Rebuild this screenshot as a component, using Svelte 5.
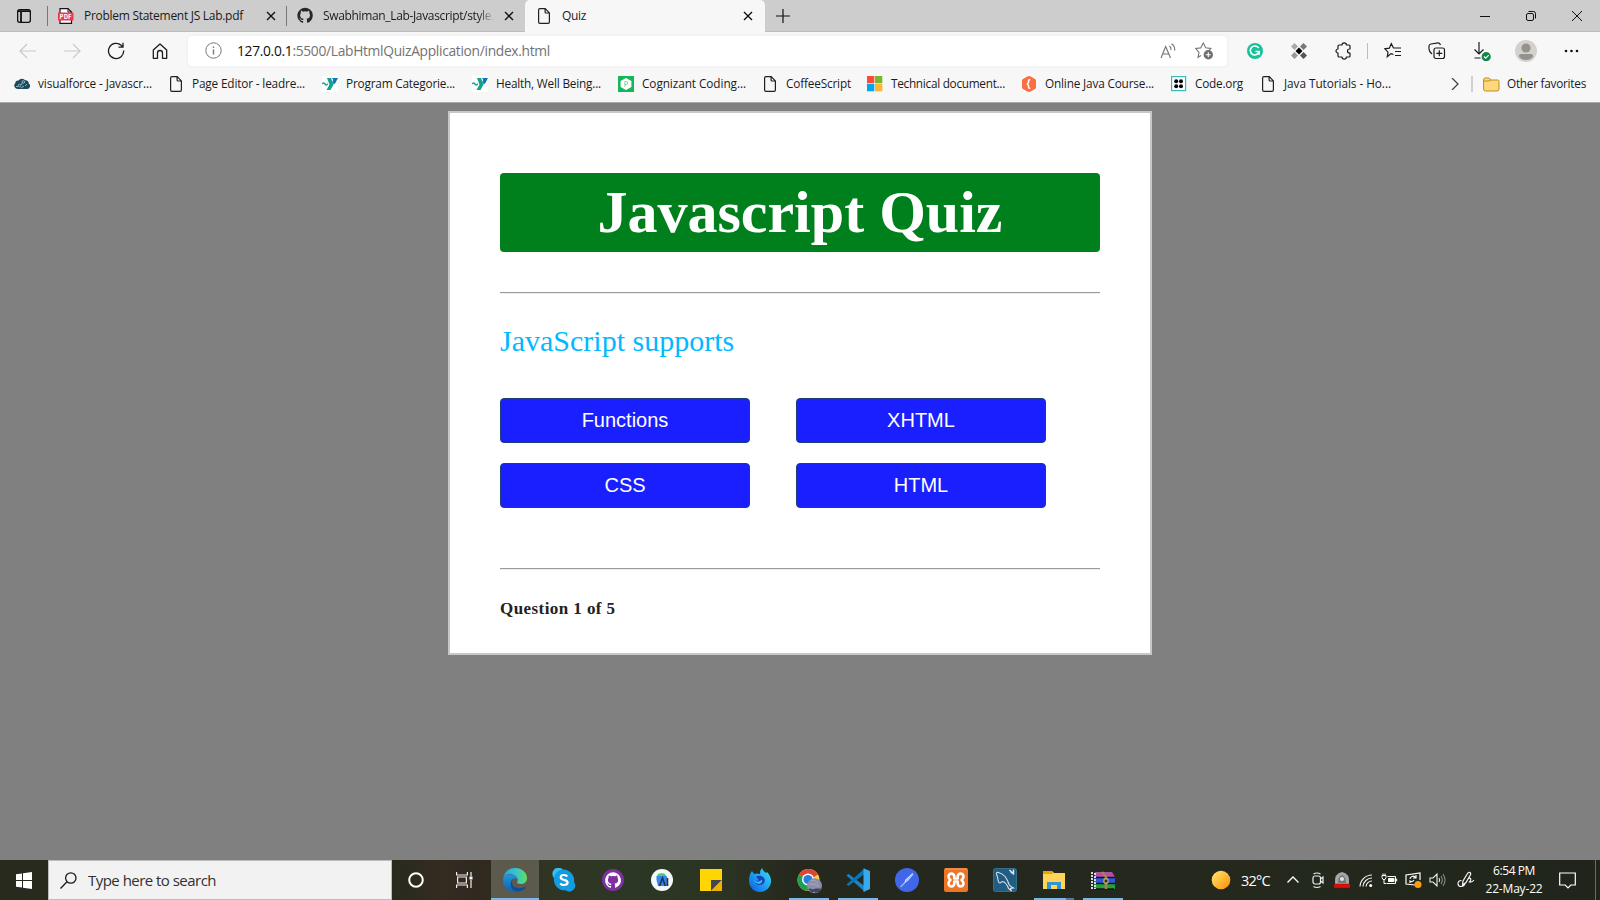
<script>
  const bookmarks = [
    { icon: 'cloud', label: 'visualforce - Javascr...', w: 114, gap: 16 },
    { icon: 'doc', label: 'Page Editor - leadre...', w: 113, gap: 17 },
    { icon: 'ymca', label: 'Program Categorie...', w: 109, gap: 17 },
    { icon: 'ymca', label: 'Health, Well Being...', w: 105, gap: 17 },
    { icon: 'cognizant', label: 'Cognizant Coding...', w: 104, gap: 16 },
    { icon: 'doc', label: 'CoffeeScript', w: 65, gap: 16 },
    { icon: 'microsoft', label: 'Technical document...', w: 114, gap: 16 },
    { icon: 'hex', label: 'Online Java Course...', w: 109, gap: 17 },
    { icon: 'codeorg', label: 'Code.org', w: 48, gap: 17 },
    { icon: 'doc', label: 'Java Tutorials - Ho...', w: 107, gap: 0 }
  ];
  const apps = [
    { icon: 'edge', state: 'active' },
    { icon: 'skype' },
    { icon: 'githubDesktop' },
    { icon: 'studio' },
    { icon: 'notes' },
    { icon: 'firefox' },
    { icon: 'chrome', state: 'open' },
    { icon: 'vscode', state: 'open' },
    { icon: 'postman' },
    { icon: 'xampp' },
    { icon: 'mysql' },
    { icon: 'explorer', state: 'open stacked' },
    { icon: 'winrar', state: 'open' }
  ];
  const choices = ['Functions', 'XHTML', 'CSS', 'HTML'];

  // Tracks a label so it fills the given width.
  function fit(node, width) {
    const natural = node.getBoundingClientRect().width;
    node.style.letterSpacing = (width - natural) / node.textContent.length + 'px';
  }
</script>

{#snippet octocat()}
  <path d="M12 .5a11.5 11.5 0 0 0-3.6 22.4c.6.1.8-.3.8-.6v-2.2c-3.2.7-3.900-1.400-3.900-1.400-.5-1.300-1.300-1.700-1.300-1.700-1-.7.1-.7.1-.7 1.200.1 1.800 1.200 1.800 1.200 1 1.800 2.700 1.300 3.400 1 .1-.8.4-1.300.7-1.600-2.600-.3-5.300-1.300-5.300-5.700 0-1.300.5-2.300 1.200-3.100-.1-.3-.5-1.500.1-3.100 0 0 1-.3 3.200 1.200a11 11 0 0 1 5.800 0c2.200-1.500 3.200-1.200 3.200-1.200.6 1.600.2 2.800.1 3.100.7.8 1.200 1.800 1.200 3.100 0 4.400-2.700 5.400-5.300 5.700.4.4.8 1.100.8 2.200v3.200c0 .3.2.7.8.6A11.500 11.500 0 0 0 12 .5z" />
{/snippet}

{#snippet icon(name)}
  {#if name === 'doc'}
    <svg width="12" height="16" viewBox="0 0 12 16" fill="none" stroke="#202020" stroke-width="1.200"><path d="M1.900.6H7.200L11.400 4.900V14a1.300 1.300 0 0 1-1.300 1.300H1.900A1.300 1.300 0 0 1 .6 14V1.900A1.300 1.300 0 0 1 1.900.6ZM7.100.8V4a1 1 0 0 0 1 1h3.200" /></svg>
  {:else if name === 'close'}
    <svg width="10" height="10" viewBox="0 0 10 10" stroke="#111" stroke-width="1.400"><path d="M1 1l8 8M9 1L1 9" /></svg>
  {:else if name === 'cloud'}
    <svg width="16" height="16" viewBox="0 0 16 16"><path d="M3.400 13A3.300 3.300 0 0 1 1.300 7.300 3 3 0 0 1 4.600 4.500a4 4 0 0 1 6.600-.2A3 3 0 0 1 14.700 7.500 3 3 0 0 1 13.500 13Z" fill="#164a5c" /><g fill="none" stroke="#b5ced5" stroke-width=".8"><circle cx="9.300" cy="6" r="1.300" /><circle cx="5.500" cy="9.500" r="1.300" /><path d="M2 10.500h2M6.800 9l1.500-2M11 9.800l2-1.500M7 12l3-2" /></g></svg>
  {:else if name === 'ymca'}
    <svg width="16" height="16" viewBox="0 0 16 16"><rect width="16" height="16" fill="#fff" /><path d="M5 2h4l1.500 4L12 7.500 8.500 14H4.500L7.500 8.500Z" fill="#12a28e" /><path d="M10 2h6l-3.300 6.200L10.300 5.500l1-1.500Z" fill="#0876b8" /><path d="M0 8q1.600-2 3 0t2.800-.3" fill="none" stroke="#20a690" stroke-width="1.500" /></svg>
  {:else if name === 'cognizant'}
    <svg width="16" height="16" viewBox="0 0 16 16"><rect width="16" height="16" fill="#15b75a" /><path d="M8 1.900l5.400 3.100v6L8 14.100 2.600 11V5Z" fill="#fff" /><path d="M6.900 10.800V5.500h1.300a1.500 1.500 0 0 1 0 3H6.900" fill="none" stroke="#7cc795" stroke-width=".9" /></svg>
  {:else if name === 'microsoft'}
    <svg width="16" height="16" viewBox="0 0 16 16"><path fill="#ff4b32" d="M0 0h7.300v7.300H0z" /><path fill="#76b82a" d="M8 0h7.300v7.300H8z" /><path fill="#00a4ef" d="M0 8h7.300v7.300H0z" /><path fill="#ffb534" d="M8 8h7.300v7.300H8z" /></svg>
  {:else if name === 'hex'}
    <svg width="16" height="16" viewBox="0 0 16 16"><path d="M8 0q1.200.1 6 3 1 .7 1 2v6q0 1.300-1 2-4.800 3-6 3t-6-3q-1-.7-1-2V5q0-1.300 1-2Q6.800.1 8 0Z" fill="#fb6d43" /><path d="M9.300 3.700H8.400Q7.500 3.700 7.500 5v1.500L6.300 8l1.200 1.500V11q0 1.300.9 1.300h.9" fill="none" stroke="#fff" stroke-width="1.500" /></svg>
  {:else if name === 'codeorg'}
    <svg width="16" height="16" viewBox="0 0 16 16"><rect x=".6" y=".6" width="14" height="14" fill="#fff" stroke="#38bbbd" stroke-width="1.200" /><g fill="#050505"><circle cx="5.200" cy="5.200" r="2" /><circle cx="10" cy="5.200" r="2" /><circle cx="5.200" cy="10.200" r="2" /><circle cx="10" cy="10.200" r="2" /></g></svg>
  {:else if name === 'edge'}
    <svg width="24" height="24" viewBox="0 0 24 24"><defs><linearGradient id="edgeTop"><stop offset="0" stop-color="#1ba7e5" /><stop offset=".55" stop-color="#37c5d3" /><stop offset="1" stop-color="#65dc55" /></linearGradient><linearGradient id="edgeSide" x2="0" y2="1"><stop offset="0" stop-color="#2494df" /><stop offset="1" stop-color="#0865b4" /></linearGradient></defs><path d="M.2 11C.8 4.500 5.500 0 12 0c7 0 12 4.600 12 10 0 4-3 6-6 6-2.500 0-4-.8-4-1.700 0-.5.800-.8.800-2.200C14.800 8 10 6 6.400 6 3.500 6 1.200 7.800.2 11Z" fill="url(#edgeTop)" /><path d="M.1 12C.2 8.500 3 6.500 6.400 6.500c4.800 0 8.200 2.500 8.300 5.300-.5-1-1.500-1.600-2.700-1.600-3 0-4.800 3-4.200 6 .6 3.500 3.500 6.500 7.500 7.200C7.500 25.500 0 20 .1 12Z" fill="url(#edgeSide)" /><path d="M9.800 11c-2.500 5 .7 9.300 6.500 9.300 2.800 0 5-1 6.200-1.700.4-.2.6.1.4.5C21 22 18.600 23.400 15.500 23.600 9 23.800 5 16 9.800 11Z" fill="#104f98" /></svg>
  {:else if name === 'skype'}
    <svg width="24" height="24" viewBox="0 0 24 24"><path d="M7 1a6 6 0 0 1 4 .6A10.600 10.600 0 0 1 22 14a6 6 0 0 1-8.500 8.300A10.600 10.600 0 0 1 2 10 6 6 0 0 1 7 1Z" fill="#159bdf" /><path d="M2 10a6 6 0 0 1 9-8.400C6 2 3 5 2 10Z" fill="#37bff2" /><path d="M15.300 8.500q-1.100-1.500-3.600-1.500-3 0-3 2.300 0 1.800 3 2.500 4 .8 3.900 2.900-.2 2.300-3.600 2.300-2.600 0-3.700-1.700" fill="none" stroke="#fff" stroke-width="2.200" /></svg>
  {:else if name === 'githubDesktop'}
    <svg width="24" height="24" viewBox="0 0 24 24"><circle cx="12" cy="12" r="11" fill="#7c319f" /><g fill="#fff" transform="translate(3.700 4) scale(.69)">{@render octocat()}</g></svg>
  {:else if name === 'studio'}
    <svg width="24" height="24" viewBox="0 0 24 24"><circle cx="12" cy="12" r="11" fill="#f5f7f8" /><path d="M7 8.500q0-3.300 4.500-3.300h1.200Q16 5.500 16 8.500Z" fill="#3ccf7e" /><path d="M6.500 8h9.500q1 0 1 1v9H8L6.500 12Z" fill="#3a83ed" /><path d="M9.500 18l3-8 2.800 8" fill="none" stroke="#18344c" stroke-width="1.600" /><path d="M17.500 10v8" stroke="#26364b" stroke-width="1.600" /></svg>
  {:else if name === 'notes'}
    <svg width="24" height="24" viewBox="0 0 24 24"><path d="M1 1h22v22H1Z" fill="#ffd504" /><path d="M12 23V12h11Z" fill="#45454a" /><path d="M12 23L23 12v11Z" fill="#eeb100" /></svg>
  {:else if name === 'firefox'}
    <svg width="24" height="24" viewBox="0 0 24 24"><defs><linearGradient id="fox" x1="1" x2="0" y2="1"><stop stop-color="#3ce4ef" /><stop offset=".55" stop-color="#1a9af1" /><stop offset="1" stop-color="#1557d4" /></linearGradient></defs><path d="M4 3l2 3q3-1 6 0 0-4 2-6 1 3 4 5l1-1q4 4 4 9a11 11 0 0 1-22 0Q.800 7 4 3Z" fill="url(#fox)" /><path d="M8 8.500q4-1.500 7 .5 2.500 2 1.500 5t-5 3-4.500-4l4-.5Z" fill="#203dba" /><path d="M6 12q3 3 6 1l2-1.500q1 3.500-3 4.500-4-.5-5-4Z" fill="#31bdf7" /></svg>
  {:else if name === 'chrome'}
    <svg class="badged" width="24" height="24" viewBox="0 0 24 24"><circle cx="11.500" cy="12" r="11" fill="#ffcd3f" /><path d="M11.500 12L2 6.500A11 11 0 0 1 21 6.500Z" fill="#df4535" /><path d="M11.500 12L2 6.500A11 11 0 0 0 11.500 23Z" fill="#219d55" /><circle cx="11" cy="11.500" r="6" fill="#fff" /><circle cx="11" cy="11.500" r="4.600" fill="#257ee0" /><circle cx="17.500" cy="17.800" r="7.500" fill="#8b8da9" /><path d="M11 21l2.500-.5 2 1 3-1 5.500 0-2 4-2-.5-1 1-2-1.500-2 1.500-1.500-2Z" fill="#42445b" /><path d="M14 13l3-1 4 3M12 16l5 0 5 2" stroke="#a5a8c0" fill="none" /></svg>
  {:else if name === 'vscode'}
    <svg width="24" height="24" viewBox="0 0 24 24"><path d="M.5 7.500L2.500 6 18.500 18v5.500Z" fill="#1685ce" /><path d="M.5 16.500L2.500 18 18.500 6V.5Z" fill="#0874b6" /><path d="M17.500.2L24 3v18l-6.500 3Z" fill="#39a9ee" /></svg>
  {:else if name === 'postman'}
    <svg width="24" height="24" viewBox="0 0 24 24"><circle cx="12" cy="12" r="12" fill="#4167e8" /><path d="M9 15.500l1.500-4 7-6.500.8 1.500-5 6Z" fill="#e9edff" /><path d="M5.500 19l4.500-4.500M11 13l7-7" stroke="#a2bafb" stroke-width="1.200" /></svg>
  {:else if name === 'xampp'}
    <svg width="24" height="24" viewBox="0 0 24 24"><rect width="24" height="24" rx="2" fill="#ee7426" /><path d="M1 1h22" stroke="#f8a369" /><path d="M10.300 10.500V8.500a2.900 2.900 0 0 0-5.800 0q0 2 2 3.500-2 1.500-2 3.500a2.900 2.900 0 0 0 5.800 0v-2h3.400v2a2.900 2.900 0 0 0 5.800 0q0-2-2-3.500 2-1.500 2-3.500a2.900 2.900 0 0 0-5.800 0v2Z" fill="none" stroke="#fff" stroke-width="2.600" stroke-linejoin="round" /></svg>
  {:else if name === 'mysql'}
    <svg width="24" height="24" viewBox="0 0 24 24"><rect x=".5" y=".5" width="23" height="23" rx="2" fill="#215d83" stroke="#356f8e" /><path d="M7 15q-1.500 0-2-3 0-2-1.500-6-.5-2 2-1.500 4 1 7 4.500 2.500 4 3.500 7.500 1 2 4.500 3.500l-3 .5 1 2.500-3-2.500q-2-6-6-7-1 .5-2.500 1.500Z" fill="none" stroke="#d6e2e9" stroke-width="1.100" /><path d="M16.500 2l4.500 4.500M20.500 1.500v3h-3" fill="none" stroke="#dce6ed" stroke-width="1.500" /></svg>
  {:else if name === 'explorer'}
    <svg width="24" height="24" viewBox="0 0 24 24"><path d="M1 3h9l2 2h11v16H1Z" fill="#ffd458" /><path d="M1 3h9l1 3H1Z" fill="#e9a500" /><path d="M5 21v-7h14v7h-4v-4H9v4Z" fill="#3295d3" /></svg>
  {:else if name === 'winrar'}
    <svg width="26" height="24" viewBox="0 0 26 24"><path d="M5 4h17l3 5H5Z" fill="#b250a5" /><path d="M4 10h21v5H4Z" fill="#2f56dc" /><path d="M4 16h21v5H4Z" fill="#21a33b" /><path d="M4 9.500h21M4 15.500h21M4 21h20" stroke="#171717" stroke-width="1.500" /><path d="M2 4v17M5 5v16" stroke="#d9dae1" stroke-width="2" stroke-dasharray="2 1" /><path d="M12 4l4 5v12" fill="none" stroke="#a98449" stroke-width="2.500" /><path d="M14 11h4v4h-4Z" fill="#332e28" stroke="#e3c574" /></svg>
  {/if}
{/snippet}

<div class="screen">
  <header>
    <div class="tabs">
      <div class="tab-actions"><svg width="14" height="14" viewBox="0 0 14 14" fill="none" stroke="#111" stroke-width="1.300"><rect x=".65" y=".65" width="12.700" height="12.700" rx="2" /><path d="M1 2.200h12M4 3v10" stroke-width="1.800" /></svg></div>
      <div class="tab">
        <svg class="tab-icon" width="16" height="16" viewBox="0 0 16 16"><path d="M2 .6h8L13.500 4v11.400H2Z" fill="#fff" stroke="#17171b" stroke-width="1.200" /><path d="M10 .6V4h3.500" fill="none" stroke="#17171b" /><rect x="0" y="4.500" width="15.500" height="8" fill="#f33649" /><text x="1.800" y="10.500" textLength="11.800" font-family="Inter" font-size="5.500" font-weight="800" fill="#fff">PDF</text></svg>
        <span class="title"><span use:fit={159}>Problem Statement JS Lab.pdf</span></span>
        {@render icon('close')}
      </div>
      <div class="tab second">
        <svg class="tab-icon" width="17" height="17" viewBox="0 0 24 24" fill="#24292f">{@render octocat()}</svg>
        <span class="title faded"><span use:fit={171}>Swabhiman_Lab-Javascript/style.</span></span>
        {@render icon('close')}
      </div>
      <div class="tab current">
        <span class="tab-icon">{@render icon('doc')}</span>
        <span class="title"><span use:fit={24}>Quiz</span></span>
        {@render icon('close')}
      </div>
      <svg class="plus" width="14" height="14" viewBox="0 0 14 14" stroke="#111" stroke-width="1.200"><path d="M7 0v14M0 7h14" /></svg>
      <div class="window-controls">
        <svg width="12" height="12" viewBox="0 0 12 12" stroke="#111"><path d="M1 6.500h10" /></svg>
        <svg width="12" height="12" viewBox="0 0 12 12" fill="none" stroke="#111"><rect x="1.500" y="3.500" width="7" height="7" rx="1.500" /><path d="M3.500 1.500h5a2 2 0 0 1 2 2v5" /></svg>
        <svg width="12" height="12" viewBox="0 0 12 12" stroke="#111"><path d="M1 1l10 10M11 1L1 11" /></svg>
      </div>
    </div>

    <div class="toolbar">
      <div class="nav">
        <svg width="18" height="18" viewBox="0 0 18 18" fill="none" stroke="#c9c9c9" stroke-width="1.200"><path d="M17 9H1M8 2L1 9l7 7" /></svg>
        <svg width="18" height="18" viewBox="0 0 18 18" fill="none" stroke="#c9c9c9" stroke-width="1.200"><path d="M1 9h16M10 2l7 7-7 7" /></svg>
        <svg width="18" height="18" viewBox="0 0 18 18" fill="none" stroke="#1c1c1c" stroke-width="1.300"><path d="M16.700 8.500a7.600 7.600 0 1 1-2.500-5.200L16 5M16 .8v4.400h-4.500" /></svg>
        <svg width="18" height="18" viewBox="0 0 18 18" fill="none" stroke="#1c1c1c" stroke-width="1.300"><path d="M2.300 8L9 1.900 15.700 8v8.300h-4.200V11a2.500 2.500 0 0 0-5 0v5.300H2.300Z" stroke-linejoin="round" /></svg>
      </div>
      <div class="address">
        <svg width="17" height="17" viewBox="0 0 17 17" fill="none" stroke="#777"><circle cx="8.500" cy="8.500" r="7.700" /><path d="M8.500 7.500v5M8.500 4.500V6" stroke-width="1.400" /></svg>
        <span class="url" use:fit={313}><b>127.0.0.1</b>:5500/LabHtmlQuizApplication/index.html</span>
        <svg class="read" width="16" height="16" viewBox="0 0 16 16" fill="none" stroke="#737373" stroke-width="1.100"><path d="M1 15L5.700 3.500 10.500 15M2.800 11h6M9.500 3q1.700 1.200 1.500 4M11.500.8Q15 3 14.700 7.500" /></svg>
        <svg class="star" width="19" height="19" viewBox="0 0 19 19" fill="none" stroke="#777" stroke-width="1.100"><path d="M6 14.500l-3 1.800 1-5L.8 7.500l4.900-.6L8.300 2l2.400 4.800 5.200.6-2 2" /><circle cx="13.300" cy="13.800" r="4.700" fill="#6e6e6e" stroke="none" /><path d="M13.300 11.300v5M10.800 13.800h5" stroke="#fff" /></svg>
      </div>
      <div class="extensions">
        <svg width="18" height="18" viewBox="0 0 18 18"><circle cx="9" cy="9" r="8" fill="#15c39a" /><path d="M12.700 6.200A4.500 4.500 0 1 0 13.200 9.500H9.500M13.200 9.500v3.200" fill="none" stroke="#fff" stroke-width="1.600" /></svg>
        <svg width="18" height="18" viewBox="0 0 18 18"><path d="M4.500 1l3.500 3.500-3.500 3.500L1 4.500Z" fill="#aaa" /><path d="M13.500 1L17 4.500 13.500 8 10 4.500Z" fill="#777" /><path d="M4.500 10L8 13.500 4.500 17 1 13.500Z" fill="#999" /><path d="M13.500 10l3.500 3.500-3.500 3.500-3.500-3.500Z" fill="#555" /><path d="M9 5.500L12.500 9 9 12.500 5.500 9Z" fill="#000" /></svg>
        <svg width="18" height="18" viewBox="0 0 18 18" fill="none" stroke="#1b1b1b" stroke-width="1.200"><path d="M5 3h3a2.200 2.200 0 0 1 4.400 0H15q1 0 1 1v3h-.5a2 2 0 0 0 0 4h.5v3q0 1-1 1h-2.600a2.200 2.200 0 0 1-4.400 0H5q-1 0-1-1v-3a2 2 0 1 1 0-4V4q0-1 1-1Z" stroke-linejoin="round" /></svg>
      </div>
      <i class="rule"></i>
      <div class="tools">
        <svg width="18" height="18" viewBox="0 0 18 18" fill="none" stroke="#1b1b1b" stroke-width="1.200"><path d="M9.500 12.500L7 11.600 3.300 14.800 4 10.200.8 6.800l4.500-.6L7.300 1.700 9.500 6H17M11 9.500h6M11 13.500h6" /></svg>
        <svg width="18" height="18" viewBox="0 0 18 18" fill="none" stroke="#1b1b1b" stroke-width="1.200"><rect x="6" y="6" width="10.500" height="10.500" rx="2" /><path d="M11.300 8.300v6M8.300 11.300h6M4 12Q1 9.500 1 7V4q0-1.500 2-2L10 .8q1.800-.2 2.500 2.200" /></svg>
        <svg class="downloads" width="18" height="20" viewBox="0 0 18 20" fill="none" stroke="#1b1b1b" stroke-width="1.200"><path d="M6 1v12M1.500 8.500L6 13l4.500-4.500M1.500 17h6" /><circle cx="13.200" cy="15.700" r="4.600" fill="#12854a" stroke="none" /><path d="M11 15.500l1.700 1.700 3-3" stroke="#fff" /></svg>
        <svg class="avatar" width="22" height="22" viewBox="0 0 22 22"><circle cx="11" cy="11" r="11" fill="#d3d1ce" /><circle cx="11" cy="8" r="4.600" fill="#96918d" /><path d="M3.800 16.500q0-2.500 2.500-2.500h9.400q2.500 0 2.500 2.500Q15.500 20 11 20t-7.200-3.500Z" fill="#96918d" /></svg>
        <svg width="18" height="18" viewBox="0 0 18 18" fill="#111"><circle cx="4" cy="9" r="1.300" /><circle cx="9.500" cy="9" r="1.300" /><circle cx="15" cy="9" r="1.300" /></svg>
      </div>
    </div>

    <div class="bookmarks">
      {#each bookmarks as b}
        <div class="bookmark" style:margin-right="{b.gap}px">
          <span class="fav">{@render icon(b.icon)}</span>
          <span class="bookmark-label"><span use:fit={b.w}>{b.label}</span></span>
        </div>
      {/each}
      <svg class="more" width="8" height="12" viewBox="0 0 8 12" fill="none" stroke="#444" stroke-width="1.300"><path d="M1 0l6 6-6 6" /></svg>
      <i class="rule small"></i>
      <svg class="folder" width="17" height="15" viewBox="0 0 17 15"><path d="M.6 3Q.6 1 2.300 1H6l2 2h6.500Q16 3 16 4.500V12q0 2-2 2H2.500Q.6 14 .6 12Z" fill="#ffd979" stroke="#bf8b28" /><path d="M1 4h5l2-1" fill="none" stroke="#bf8b28" /></svg>
      <span class="bookmark-label"><span use:fit={79}>Other favorites</span></span>
    </div>
  </header>

  <main>
    <section class="quiz">
      <h1>Javascript Quiz</h1>
      <hr />
      <p class="question">JavaScript supports</p>
      <div class="choices">
        {#each choices as choice}<button>{choice}</button>{/each}
      </div>
      <hr />
      <p class="progress"><span use:fit={115.500}>Question 1 of 5</span></p>
    </section>
  </main>

  <footer>
    <div class="start"><svg width="17" height="17" viewBox="0 0 17 17" fill="#fff"><path d="M0 2.300L6 1.500V8H0ZM7 1.300L16 0v8H7ZM0 9h6v6.500L0 14.700ZM7 9h9v8l-9-1.300Z" /></svg></div>
    <div class="search">
      <svg width="17" height="17" viewBox="0 0 17 17" fill="none" stroke="#1b1b1b" stroke-width="1.300"><circle cx="10.800" cy="6" r="5.200" /><path d="M7 9.800L.5 16.500" /></svg>
      <span use:fit={128}>Type here to search</span>
    </div>
    <div class="shell"><svg width="16" height="16" viewBox="0 0 16 16" fill="none" stroke="#fff" stroke-width="2"><circle cx="8" cy="8" r="6.800" /></svg></div>
    <div class="shell view"><svg width="17" height="16" viewBox="0 0 17 16" fill="none" stroke="#eee" stroke-width="1.200"><path d="M.6 0v3h10.800V0M.6 16v-3h10.800v3M1.600 5h8.800v6H1.600ZM15 0v4M15 8v8" /><path d="M13.500 4.500h3v3h-3Z" fill="#fff" stroke="none" /></svg></div>
    <nav>
      {#each apps as app}
        <div class="app {app.state ?? ''}">{@render icon(app.icon)}</div>
      {/each}
    </nav>
    <div class="weather">
      <svg width="20" height="20" viewBox="0 0 20 20"><defs><linearGradient id="sun" x2="1" y2="1"><stop stop-color="#ffea75" /><stop offset="1" stop-color="#ff8d00" /></linearGradient></defs><circle cx="10" cy="10" r="9.300" fill="url(#sun)" /></svg>
      <span use:fit={29}>32°C</span>
    </div>
    <div class="tray">
      <svg width="12" height="18" viewBox="0 0 12 18" fill="none" stroke="#fff" stroke-width="1.300"><path d="M.5 11.500L6 6l5.500 5.500" /></svg>
      <svg width="16" height="18" viewBox="0 0 16 18" fill="none" stroke="#eee" stroke-width="1.200"><rect x="3" y="5" width="7.500" height="8" rx="2" /><path d="M10.500 8l2.500-2v6l-2.500-2M3.500 3q3.500-2 7 0M3.500 15.500q3.500 2 7 0" /></svg>
      <svg width="18" height="18" viewBox="0 0 18 18"><path d="M2 13Q1 2 9 1q8 1 7 12Z" fill="#a5a6a6" /><path d="M5 12q0-7 4-8 4 1 4 8Z" fill="#747878" /><circle cx="9" cy="8" r="2" fill="#e3e3e3" /><path d="M1 13h16v4H1Z" fill="#e60c05" stroke="#601818" stroke-width=".5" /></svg>
      <svg width="16" height="18" viewBox="0 0 16 18" fill="none" stroke="#eee" stroke-width="1.200"><path d="M2 15.500A12 12 0 0 1 14 4M5 15.500A9 9 0 0 1 14 7M8 15.500A6 6 0 0 1 14 10" /><circle cx="12.700" cy="14.500" r="1.500" fill="#fff" stroke="none" /></svg>
      <svg width="17" height="18" viewBox="0 0 17 18" fill="none" stroke="#fff"><path d="M6.500 5.500h8v7h-9M15.700 7.500v3" /><path d="M7.500 7.500h5.500v3H7.500Z" fill="#fff" /><path d="M1 4.500h4v2L4 8.500H2L1 6.500ZM2 2.500v2M4 2.500v2M3 8.500v4h2" /></svg>
      <svg width="17" height="18" viewBox="0 0 17 18" fill="none" stroke="#fff" stroke-width="1.200"><path d="M10 14L1 13V4l14-2v7M5 8a3 3 0 0 1 5-2h1M11 4v3H8M9 9a3 3 0 0 1-4 1v2" /><circle cx="13" cy="13.500" r="3.500" fill="#ff9c12" stroke="none" /></svg>
      <svg width="17" height="18" viewBox="0 0 17 18" fill="none" stroke="#eee" stroke-width="1.100"><path d="M1 7h3l4-4v12l-4-4H1ZM10 7q1.200 2 0 4" /><path d="M12 5q2.500 4 0 8M14 3q4 6 0 12" stroke="#8a8c86" /></svg>
      <svg class="pen" width="18" height="18" viewBox="0 0 18 18" fill="none" stroke="#f5f5f5" stroke-width="1.200"><path d="M4.500 9.500Q1 9.500 1 12.700q.2 2.800 3 2.800 3-.2 4-3M5.500 14l.5-4 4.500-7.500q1-1.800 2.500-1 1.300.8.300 2.500L9 11.500ZM10.500 8.500q1.800-2 3-1 .8 1.500-1 3.500 2.500.5 4.500-2" /></svg>
    </div>
    <div class="clock"><span use:fit={42}>6:54 PM</span><span use:fit={57}>22-May-22</span></div>
    <svg class="notice" width="17" height="17" viewBox="0 0 17 17" fill="none" stroke="#fff" stroke-width="1.200"><path d="M.7 1h15.600v12h-4.500L9 15.800 6.200 13H.7Z" /></svg>
    <i class="desktop"></i>
  </footer>
</div>

<style>
  :global(body) { margin: 0; overflow: hidden; }
  .screen { width: 1600px; height: 900px; display: flex; flex-direction: column; background: #808080; font-family: "Open Sans", "Noto Sans", sans-serif; font-size: 12px; color: #1b1b1b; }
  .screen * { box-sizing: border-box; }
  svg { display: block; flex: none; }
  span { white-space: nowrap; }
  header { height: 103px; background: #f7f7f7; border-bottom: 1px solid #a9a9a9; flex: none; }
  .tabs { height: 32px; display: flex; align-items: center; background: #cdcdcd; border-bottom: 1px solid #bdbdbd; }
  .tab-actions { width: 48px; height: 20px; padding: 3px 0 0 17px; border-right: 1px solid #777; }
  .tab { width: 239px; height: 20px; display: flex; align-items: center; padding: 0 10px 0 10px; border-right: 1px solid #777; }
  .tab.second { width: 238px; padding-right: 11px; border: 0; }
  .tab.current { width: 240px; height: 32px; background: #f7f7f7; border: 0; border-radius: 5px 5px 0 0; padding: 0 12px 0 13px; }
  .tab-icon { width: 16px; margin-right: 10px; flex: none; }
  .tab.current .tab-icon { width: 12px; margin-right: 12px; }
  .tab > :global(svg:last-child) { margin-left: auto; }
  .title { display: flex; height: 18px; line-height: 17px; }
  .title.faded { width: 172px; -webkit-mask-image: linear-gradient(90deg, #000 90%, transparent); mask-image: linear-gradient(90deg, #000 90%, transparent); }
  .plus { margin-left: 11px; }
  .window-controls { display: flex; gap: 34px; margin-left: auto; margin-right: 17px; }
  .toolbar { height: 37px; display: flex; align-items: center; }
  .nav { display: flex; gap: 26px; width: 188px; padding-left: 19px; }
  .address { width: 1039px; height: 30px; display: flex; align-items: center; padding: 0 13px 0 17px; background: #fff; border-radius: 4px; box-shadow: 0 0 3px #e5e5e5; }
  .url { margin-left: 15px; font-size: 13.800px; line-height: 20px; color: #737373; }
  .url b { font-weight: 400; color: #111; }
  .read { margin-left: auto; margin-right: 19px; }
  .extensions { display: flex; gap: 26px; padding-left: 19px; }
  .rule { width: 1px; height: 16px; background: #bdbdbd; margin-left: 15px; }
  .tools { display: flex; align-items: center; margin-left: 16px; gap: 26px; }
  .downloads { margin-left: 1px; }
  .avatar { margin: 0 -1px 0 -2px; }
  .bookmarks { height: 33px; display: flex; align-items: center; padding: 0 14px 3px; }
  .bookmark { display: flex; align-items: center; flex: none; }
  .fav { margin-right: 8px; }
  .bookmark:nth-child(2), .bookmark:nth-child(6), .bookmark:nth-child(10) { padding-left: 2px; }
  .bookmark:nth-child(2) .fav, .bookmark:nth-child(6) .fav, .bookmark:nth-child(10) .fav { margin-right: 10px; }
  .bookmark-label { font-size: 11.800px; line-height: 15px; height: 17px; display: flex; }
  .more { margin-left: auto; }
  .rule.small { margin-left: 12px; width: 2px; background: #cfcfcf; }
  .folder { margin: 0 7px 0 10px; }
  main { flex: 1; padding-top: 8px; font-family: "Liberation Serif", serif; }
  .quiz { width: 704px; height: 544px; margin: 0 auto; padding: 60px 50px 0; border: 2px solid #c8c8c8; background: #fff; }
  h1 { margin: 0 0 40px; height: 79px; border-radius: 4px; background: #00801c; color: #fff; font-size: 60px; line-height: 78px; text-align: center; }
  hr { height: 2px; margin: 0; border: 0; border-top: 1px solid #999; border-bottom: 1px solid #eee; }
  .question { margin: 28px 0 0; height: 76px; font-size: 30px; line-height: 37px; color: #00b9ff; }
  .choices { height: 170px; display: grid; grid-template-columns: 250px 250px; grid-auto-rows: 45px; gap: 20px 46px; align-content: start; }
  button { padding: 0; border: 1px solid #1d3f79; border-radius: 4px; background: #1a1fff; color: #fff; font: 20px "Liberation Sans", sans-serif; }
  .progress { margin: 28px 0 0; font-size: 17px; line-height: 22px; font-weight: 700; color: #222; }
  footer { height: 40px; display: flex; align-items: center; color: #fff; background: linear-gradient(90deg, #272a1d 0, #272a1d 385px, #342b21 440px, #30291f 480px, #303523 550px, #2b3725 650px, #2b3323 730px, #25281d 800px, #25291d 1200px, #22271c 1450px, #20241b); }
  .start { width: 48px; padding-left: 16px; }
  .search { width: 344px; height: 40px; display: flex; align-items: center; padding-left: 11px; gap: 11px; background: #f2f2f2; border: 1px solid #bcbcbc; color: #303030; font-size: 15px; }
  .search span { line-height: 20px; padding-bottom: 1px; }
  .shell { width: 48px; display: grid; place-items: center; }
  .shell.view { width: 51px; padding-right: 2px; }
  nav { display: flex; }
  .app { width: 49px; height: 40px; display: grid; place-items: center; background-repeat: no-repeat; background-position: 50% 100%; }
  .app.active { width: 48px; background: #5b5a4d; box-shadow: inset 0 -2px #76b9ed; }
  .app.open { background-image: linear-gradient(#76b9ed, #76b9ed); background-size: 40px 2px; }
  .app.stacked { background-image: linear-gradient(90deg, #76b9ed 80%, #527a98 80%); }
  .badged { overflow: visible; }
  .weather { width: 75px; margin-left: 84px; display: flex; align-items: center; gap: 10px; font-size: 14.500px; }
  .tray { display: flex; align-items: center; gap: 7px; margin-left: 1px; }
  .tray svg:first-child { margin-right: 4px; }
  .tray .pen { margin-left: 4px; margin-right: 1px; }
  .clock { display: flex; flex-direction: column; align-items: center; width: 70px; margin-left: 3px; line-height: 18px; font-size: 12px; }
  .notice { margin-left: 10px; }
  .desktop { width: 1px; height: 40px; margin-left: auto; margin-right: 4px; background: #696c65; }
</style>
